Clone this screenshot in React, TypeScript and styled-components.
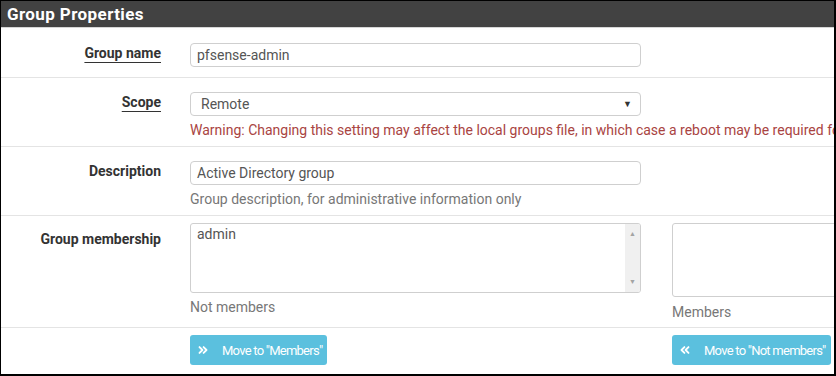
import styled, { createGlobalStyle } from "styled-components";
import { ChevronsLeft, ChevronsRight } from "lucide-react";

const GlobalStyle = createGlobalStyle`
  html, body {
    margin: 0;
    padding: 0;
    background: #fff;
  }
  body {
    font-family: Roboto, "Liberation Sans", sans-serif;
  }
`;

const Frame = styled.div`
  box-sizing: border-box;
  width: 836px;
  height: 376px;
  border-style: solid;
  border-color: #000;
  border-width: 1px 2px 2px 1px;
  overflow: hidden;
  background: #fff;
`;

const Heading = styled.div`
  height: 26px;
  background: #424242;
  color: #fff;
  font-size: 17px;
  font-weight: 700;
  letter-spacing: 0.4px;
  line-height: 26px;
  padding-left: 6px;
  border-bottom: 1px solid #d6d6d6;
`;

const Row = styled.div<{ $top: number; $bottom: number }>`
  display: grid;
  grid-template-columns: 189px 1fr;
  padding: ${(p) => p.$top}px 0 ${(p) => p.$bottom}px;
  border-bottom: 1px solid #e4e4e4;

  &:last-child {
    border-bottom: none;
  }
`;

const Label = styled.div<{ $offset?: number; $required?: boolean }>`
  text-align: right;
  padding-right: 29px;
  padding-top: ${(p) => p.$offset || 0}px;
  font-size: 14px;
  font-weight: 700;
  line-height: 20px;
  color: #333;

  span {
    text-decoration: ${(p) => (p.$required ? "underline" : "none")};
    text-underline-offset: 4px;
    text-decoration-thickness: 1px;
  }
`;

const Field = styled.div`
  width: 451px;
`;

const Input = styled.div`
  box-sizing: border-box;
  height: 24px;
  border: 1px solid #cfcfcf;
  border-radius: 4px;
  padding: 0 6px;
  font-size: 14px;
  line-height: 22px;
  color: #555;
`;

const Select = styled(Input)`
  display: flex;
  justify-content: space-between;
  align-items: center;
  padding: 0 8px 0 10px;
`;

const Caret = styled.span`
  font-size: 9px;
  color: #333;
`;

const Help = styled.div<{ $warn?: boolean; $gap?: number }>`
  margin-top: ${(p) => p.$gap ?? 4}px;
  font-size: 14px;
  line-height: 20px;
  white-space: nowrap;
  color: ${(p) => (p.$warn ? "#a94442" : "#777")};
`;

const Pair = styled.div`
  display: grid;
  grid-template-columns: 451px 451px;
  column-gap: 31px;
  align-items: start;
`;

const ListBox = styled.div<{ $height: number }>`
  box-sizing: border-box;
  display: flex;
  height: ${(p) => p.$height}px;
  border: 1px solid #cfcfcf;
  border-radius: 3px;
  overflow: hidden;
`;

const Options = styled.div`
  flex: 1;
  padding: 1px 6px;
  font-size: 14px;
  line-height: 18px;
  color: #555;
`;

const Track = styled.div`
  width: 15px;
  background: #f0f0f0;
  display: flex;
  flex-direction: column;
  justify-content: space-between;
  align-items: center;
  padding: 6px 0;
  font-size: 7px;
  line-height: 8px;
  color: #a3a3a3;
`;

const Button = styled.div`
  display: inline-flex;
  align-items: center;
  gap: 12px;
  height: 30px;
  padding: 0 5px 0 6px;
  background: #5bc0de;
  border-radius: 3px;
  color: #fff;
  font-size: 13px;
  letter-spacing: -0.75px;
  white-space: nowrap;
`;

export default function App() {
  return (
    <>
      <GlobalStyle />
      <Frame>
        <Heading>Group Properties</Heading>

        <Row $top={15} $bottom={10}>
          <Label $required>
            <span>Group name</span>
          </Label>
          <Field>
            <Input>pfsense-admin</Input>
          </Field>
        </Row>

        <Row $top={14} $bottom={6}>
          <Label $required>
            <span>Scope</span>
          </Label>
          <Field>
            <Select>
              Remote
              <Caret>▼</Caret>
            </Select>
            <Help $warn $gap={4}>
              Warning: Changing this setting may affect the local groups file,
              in which case a reboot may be required for the changes to take
              effect.
            </Help>
          </Field>
        </Row>

        <Row $top={14} $bottom={6}>
          <Label>
            <span>Description</span>
          </Label>
          <Field>
            <Input>Active Directory group</Input>
            <Help>Group description, for administrative information only</Help>
          </Field>
        </Row>

        <Row $top={7} $bottom={5}>
          <Label $offset={6}>
            <span>Group membership</span>
          </Label>
          <Pair>
            <div>
              <ListBox $height={70}>
                <Options>admin</Options>
                <Track>
                  <span>▲</span>
                  <span>▼</span>
                </Track>
              </ListBox>
              <Help>Not members</Help>
            </div>
            <div>
              <ListBox $height={74}>
                <Options />
              </ListBox>
              <Help $gap={5}>Members</Help>
            </div>
          </Pair>
        </Row>

        <Row $top={7} $bottom={9}>
          <div />
          <Pair>
            <div>
              <Button>
                <ChevronsRight size={14} strokeWidth={3.2} />
                Move to "Members"
              </Button>
            </div>
            <div>
              <Button>
                <ChevronsLeft size={14} strokeWidth={3.2} />
                Move to "Not members"
              </Button>
            </div>
          </Pair>
        </Row>
      </Frame>
    </>
  );
}
